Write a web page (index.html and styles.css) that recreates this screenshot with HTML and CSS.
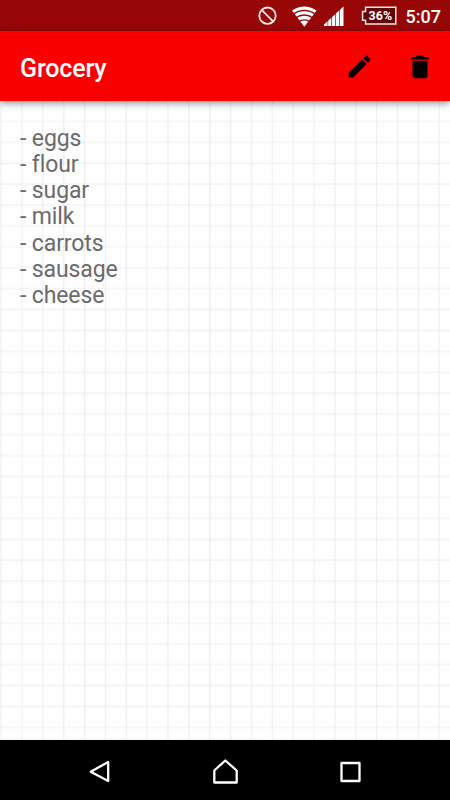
FILE: index.html
```
<!DOCTYPE html>
<html lang="en">
<head>
<meta charset="utf-8">
<title>Grocery</title>
<link rel="stylesheet" href="styles.css">
</head>
<body>
<div class="screen">
  <div class="status">
    <svg class="status-icons" width="150" height="31" viewBox="0 0 150 31" fill="none">
      <circle cx="17.5" cy="15.7" r="8.2" stroke="#fbeaea" stroke-width="1.8"/>
      <path d="M11.9 10.1l11.2 11.2" stroke="#fbeaea" stroke-width="1.8"/>
      <path d="M42 10.5Q54.3 2.5 66.6 10.5L54.3 26.8z" fill="#fff"/>
      <path d="M42.7 14.3Q54.3 6.6 65.9 14.3M45.3 18Q54.3 12 63.3 18M48.3 21.9Q54.3 18 60.3 21.9" stroke="#970707" stroke-width="1.3"/>
      <path d="M74 26V24.5L93.5 6.5V26z" fill="#fff"/>
      <path d="M77.8 6v20M81.5 6v20M85.5 6v20M89.5 6v20" stroke="#970707" stroke-width=".7"/>
      <path d="M115.6 7.3H145.8V24H115.6V20.2H112.6V11.5H115.6z" fill="#650404" stroke="#f8e6e6" stroke-width="1.5"/>
      <text class="percent" x="118.6" y="19.7" textLength="23.5" lengthAdjust="spacingAndGlyphs">36%</text>
    </svg>
    <span class="clock">5:07</span>
  </div>
  <header class="bar">
    <h1>Grocery</h1>
    <svg class="edit" width="29" height="29" viewBox="0 0 24 24"><path d="M3 17.25V21h3.75L17.81 9.94l-3.75-3.75L3 17.25zM20.71 7.04a1 1 0 0 0 0-1.41l-2.34-2.34a1 1 0 0 0-1.41 0l-1.83 1.83 3.75 3.75 1.83-1.83z"/></svg>
    <svg class="trash" width="30" height="30" viewBox="0 0 24 24"><path d="M6 19c0 1.1.9 2 2 2h8c1.1 0 2-.9 2-2V7H6v12zM19 4h-3.5l-1-1h-5l-1 1H5v2h14V4z"/></svg>
  </header>
  <main class="note">- eggs
- flour
- sugar
- milk
- carrots
- sausage
- cheese</main>
  <nav class="nav">
    <svg width="26" height="26" viewBox="0 0 26 26"><path d="M21.2 4v19L3.7 13.7z"/></svg>
    <svg width="26" height="26" viewBox="0 0 26 26"><path d="M13.3 2.5L24.7 12.5V24.5H2.3V12.5z"/></svg>
    <svg width="26" height="26" viewBox="0 0 26 26"><path d="M4.5 5h18v18H4.5z"/></svg>
  </nav>
</div>
</body>
</html>
```
FILE: styles.css
```
body {
  margin: 0;
  font-family: Roboto, sans-serif;
}

.screen {
  width: 450px;
  height: 800px;
  display: flex;
  flex-direction: column;
  overflow: hidden;
}

.status {
  height: 31px;
  flex: none;
  display: flex;
  align-items: center;
  padding-left: 250px;
  background: #970707;
  color: #fff;
}

.status-icons {
  flex: none;
}

.percent {
  font-size: 12px;
  font-weight: 700;
  fill: #fff;
}

.clock {
  margin-left: 5.5px;
  font-size: 18px;
  font-weight: 500;
  line-height: 31px;
  padding-top: 2px;
}

.bar {
  height: 70px;
  flex: none;
  box-sizing: border-box;
  display: flex;
  align-items: center;
  padding: 2px 15px 0 20px;
  background: #fb0000;
  box-shadow: 0 2px 7px rgba(0, 0, 0, 0.45);
  z-index: 1;
}

.bar h1 {
  flex: 1;
  margin: 0;
  padding-top: 3px;
  font-size: 25px;
  font-weight: 500;
  line-height: 30px;
  letter-spacing: -0.15px;
  color: #fff;
}

.edit {
  margin: 0 31px 2px 0;
}

.trash {
  margin-bottom: 1px;
}

.note {
  flex: 1;
  padding: 24.7px 20px;
  font-size: 23px;
  line-height: 26.2px;
  letter-spacing: -0.12px;
  font-variant-ligatures: none;
  color: #6b6b6b;
  white-space: pre-line;
  background-color: #fefefe;
  background-image:
    repeating-linear-gradient(to right, #0000 0, #0000000e 1px, #0000 2.4px, #0000 20.86px),
    repeating-linear-gradient(to bottom, #0000 0, #0000000e 1px, #0000 2.4px, #0000 20.89px);
  background-position: 0 -1.5px;
}

.nav {
  height: 60px;
  flex: none;
  box-sizing: border-box;
  display: flex;
  justify-content: center;
  gap: 99px;
  padding-top: 18px;
  background: #000;
}

.nav path {
  fill: none;
  stroke: #fff;
  stroke-width: 2.3;
  stroke-linejoin: round;
}
```
